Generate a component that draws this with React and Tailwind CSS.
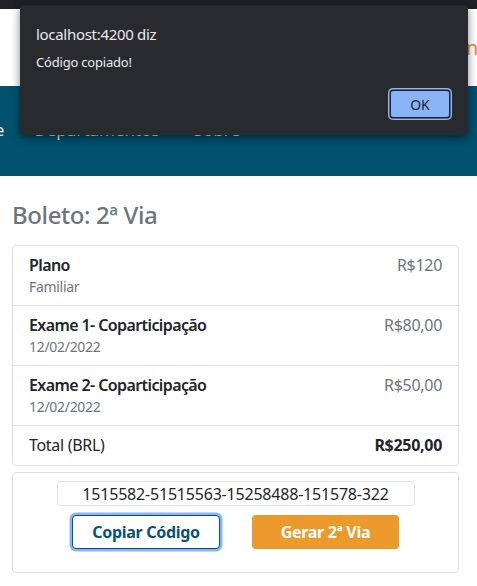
import React from "react";

const font = { fontFamily: '"Noto Sans", "Open Sans", Roboto, sans-serif' };

function Row({ title, sub, price }) {
  return (
    <div className="flex justify-between border-b border-[#dfdfdf] px-4 pt-[7px] pb-[8px]">
      <div className="flex flex-col">
        <span className="text-[16px] leading-[24px] font-semibold tracking-[-0.6px] text-[#212529]">{title}</span>
        <span className="text-[14px] leading-[20px] tracking-[-0.3px] text-[#6c757d]">{sub}</span>
      </div>
      <span className="text-[16px] leading-[24px] tracking-[-0.3px] text-[#6c757d]">{price}</span>
    </div>
  );
}

export default function App() {
  return (
    <div className="relative w-[477px] h-[586px] overflow-hidden bg-white" style={font}>
      <div className="h-[9px] bg-[#202124]" />
      <header className="h-[77px] bg-white flex items-center pl-[466px] whitespace-nowrap">
        <span className="text-[20px] text-[#ea8d2e]">ne</span>
      </header>
      <nav className="h-[90px] bg-[#01516f] flex items-start pt-[32px] whitespace-nowrap text-[17px] leading-[24px] text-[#e9eef0]">
        <span className="ml-[-44px]">Home</span>
        <span className="ml-[30px]">Departamentos</span>
        <span className="ml-[34px]">Sobre</span>
      </nav>
      <main className="px-3 pt-[24px]">
        <h4 className="text-[24px] leading-[29px] font-medium tracking-[-0.4px] text-[#6c757d] mb-[16px]">Boleto: 2ª Via</h4>
        <div className="w-[447px] border border-[#dfdfdf] rounded-[4px] flex flex-col">
          <Row title="Plano" sub="Familiar" price="R$120" />
          <Row title="Exame 1- Coparticipação" sub="12/02/2022" price="R$80,00" />
          <Row title="Exame 2- Coparticipação" sub="12/02/2022" price="R$50,00" />
          <div className="flex justify-between px-4 pt-[7px] pb-[8px] text-[16px] leading-[24px] tracking-[-0.3px] text-[#212529]">
            <span>Total (BRL)</span>
            <span className="font-bold">R$250,00</span>
          </div>
        </div>
        <div className="mt-[6px] w-[447px] h-[101px] border border-[#dfdfdf] rounded-[4px] flex flex-col items-center pt-[8px]">
          <div className="w-[358px] h-[25px] border border-[#dee2e6] rounded-[4px] flex items-center justify-center text-[16px] tracking-[-0.2px] text-[#212529]">
            1515582-51515563-15258488-151578-322
          </div>
          <div className="mt-[9px] flex gap-[32px]">
            <button className="w-[148px] h-[34px] rounded-[4px] bg-white border-[1.5px] border-[#0a5270] shadow-[0_0_0_2.5px_#8ab4f8] text-[16px] font-bold tracking-[-0.3px] text-[#0a5270]">
              Copiar Código
            </button>
            <button className="w-[147px] h-[34px] rounded-[4px] bg-[#eb9a2b] text-[16px] font-bold tracking-[-0.3px] text-white">
              Gerar 2ª Via
            </button>
          </div>
        </div>
      </main>

      <div className="absolute left-[20px] top-[5px] w-[448px] h-[130px] rounded-[4px] bg-[#292a2d] shadow-[0_3px_8px_rgba(0,0,0,0.5)] text-[#e8eaed]">
        <div className="pl-4 pt-[19px] text-[15px] leading-[20px] tracking-[-0.3px]">localhost:4200 diz</div>
        <div className="pl-4 pt-[9px] text-[13px] leading-[18px] tracking-[-0.2px]">Código copiado!</div>
        <div className="absolute left-[368px] top-[83px] w-[64px] h-[32px] rounded-[5px] bg-[#8ab4f8] shadow-[inset_0_0_0_1.5px_#8ab4f8,inset_0_0_0_3px_#202124] flex items-center justify-center text-[14px] text-[#202124]">
          OK
        </div>
      </div>
    </div>
  );
}
